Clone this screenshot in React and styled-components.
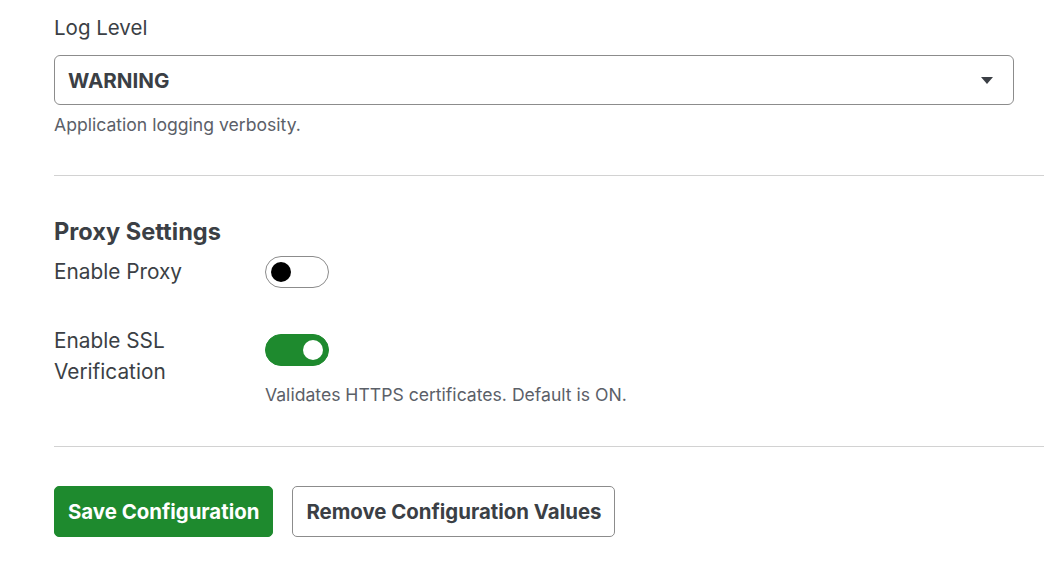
import React from "react";
import styled, { createGlobalStyle } from "styled-components";

const Global = createGlobalStyle`
  html, body { margin: 0; padding: 0; background: #fff; }
  body { font-family: Inter, Lato, sans-serif; color: #3b3f45; }
  * { box-sizing: border-box; }
`;

const Page = styled.div`
  width: 1044px;
  height: 576px;
  overflow: hidden;
  padding-left: 54px;
`;

const Field = styled.div`
  padding-top: 13px;
  padding-right: 30px;
`;

const Label = styled.div`
  font-size: 20.5px;
  line-height: 30px;
  color: #3b3f45;
`;

const SelectBox = styled.div`
  margin-top: 12px;
  height: 50px;
  border: 1px solid #8c8c8c;
  border-radius: 6px;
  display: flex;
  align-items: center;
  justify-content: space-between;
  padding: 0 20px 0 13px;
  font-size: 20.6px;
  font-weight: 700;
  color: #3b3f45;
`;

const Caret = styled.span`
  width: 0;
  height: 0;
  border-left: 6px solid transparent;
  border-right: 6px solid transparent;
  border-top: 7px solid #3b3f45;
`;

const Help = styled.div`
  margin-top: ${(p) => p.$mt || 7}px;
  font-size: 17.6px;
  line-height: 25px;
  color: #5b6068;
`;

const Divider = styled.hr`
  margin: ${(p) => p.$mt}px 0 0 0;
  border: 0;
  border-top: 1px solid #d2d2d2;
  height: 0;
`;

const Heading = styled.h2`
  margin: 40px 0 0 0;
  font-size: 23.6px;
  line-height: 31px;
  font-weight: 700;
  color: #3b3f45;
`;

const Row = styled.div`
  display: grid;
  grid-template-columns: 211px 1fr;
  align-items: start;
  margin-top: ${(p) => p.$mt}px;
`;

const RowLabel = styled.div`
  font-size: 20.8px;
  line-height: ${(p) => p.$lh || 32}px;
  color: #3b3f45;
  width: 150px;
`;

const Control = styled.div`
  padding-top: ${(p) => p.$offset}px;
`;

const Toggle = styled.div`
  width: 64px;
  height: 32px;
  border-radius: 16px;
  border: 1px solid ${(p) => (p.$on ? "#1e8a2e" : "#8c8c8c")};
  background: ${(p) => (p.$on ? "#1e8a2e" : "#fff")};
  display: flex;
  align-items: center;
  justify-content: ${(p) => (p.$on ? "flex-end" : "flex-start")};
  padding: 0 5px;
`;

const Knob = styled.span`
  width: 20px;
  height: 20px;
  border-radius: 50%;
  background: ${(p) => (p.$on ? "#fff" : "#000")};
`;

const Actions = styled.div`
  display: flex;
  gap: 19px;
  margin-top: 39px;
`;

const Button = styled.button`
  height: 51px;
  padding: 0 13px;
  font-family: inherit;
  font-size: 20.4px;
  font-weight: 700;
  border-radius: 5px;
  cursor: pointer;
  border: 1px solid ${(p) => (p.$primary ? "#1e8a2e" : "#8c8c8c")};
  background: ${(p) => (p.$primary ? "#1e8a2e" : "#fff")};
  color: ${(p) => (p.$primary ? "#fff" : "#3b3f45")};
`;

export default function App() {
  return (
    <>
      <Global />
      <Page>
        <Field>
          <Label>Log Level</Label>
          <SelectBox>
            <span>WARNING</span>
            <Caret />
          </SelectBox>
          <Help>Application logging verbosity.</Help>
        </Field>
        <Divider $mt={38} />
        <Heading>Proxy Settings</Heading>
        <Row $mt={9}>
          <RowLabel>Enable Proxy</RowLabel>
          <Control $offset={0}>
            <Toggle>
              <Knob />
            </Toggle>
          </Control>
        </Row>
        <Row $mt={37}>
          <RowLabel $lh={31}>Enable SSL Verification</RowLabel>
          <Control $offset={9}>
            <Toggle $on>
              <Knob $on />
            </Toggle>
            <Help $mt={16}>Validates HTTPS certificates. Default is ON.</Help>
          </Control>
        </Row>
        <Divider $mt={39} />
        <Actions>
          <Button $primary>Save Configuration</Button>
          <Button>Remove Configuration Values</Button>
        </Actions>
      </Page>
    </>
  );
}
